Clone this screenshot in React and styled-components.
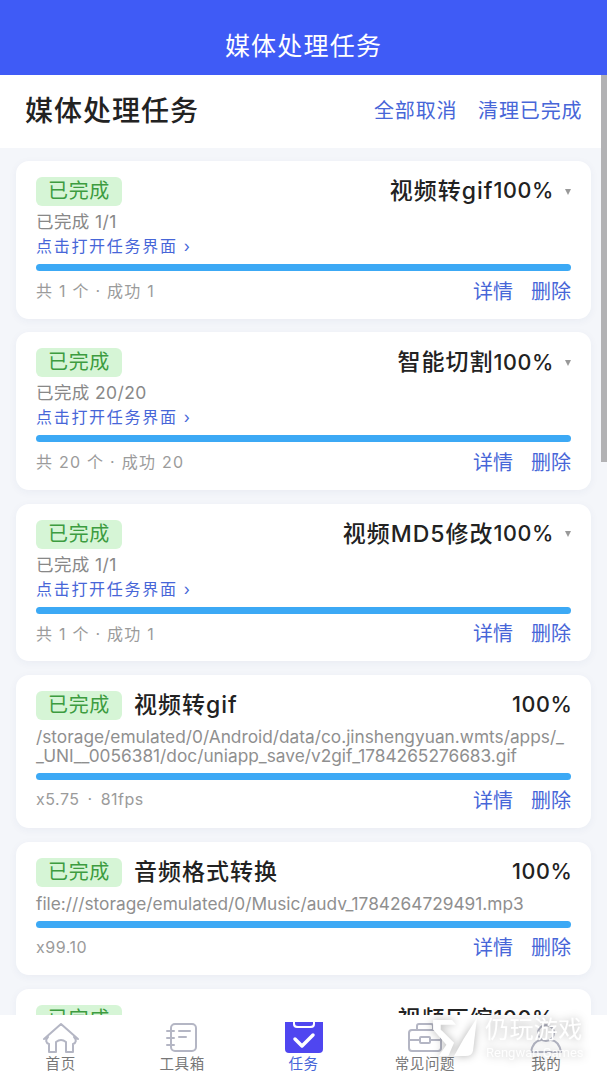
import React from 'react';
import styled, { createGlobalStyle } from 'styled-components';

const Global = createGlobalStyle`
  html, body { margin: 0; padding: 0; height: 1080px; overflow: hidden; background: #f4f6fa; }
  body { font-family: Inter, "Noto Sans CJK SC", sans-serif; }
  #root { height: 1080px; }
`;
const Page = styled.div`
  position: relative; width: 607px; height: 1080px; overflow: hidden;
  display: flex; flex-direction: column; background: #f4f6fa;
`;
const Header = styled.header`
  height: 75px; flex: none; background: #3f5bf6; color: #fff; box-sizing: border-box;
  padding-top: 30px; text-align: center; font-size: 25px; line-height: 33px; letter-spacing: 1.2px;
`;
const SubBar = styled.div`
  height: 73px; flex: none; box-sizing: border-box; background: #fff; display: flex; align-items: center;
  justify-content: space-between; padding: 0 24.5px 5px 25px;
`;
const SubTitle = styled.h1`
  margin: 0; font-size: 28px; font-weight: 500; color: #222; letter-spacing: 1px;
`;
const SubActions = styled.div`
  display: flex; gap: 20.5px; font-size: 20px; color: #4766d8; letter-spacing: 0.9px;
`;
const List = styled.main`
  flex: 1; min-height: 0; padding: 13px 16px 0; display: flex; flex-direction: column; gap: 13.7px; overflow: hidden;
`;
const Card = styled.section`
  flex: none; box-sizing: border-box; background: #fff; border-radius: 13px; padding: 16px 20px 0;
  height: ${p => p.$h}px; box-shadow: 0 2px 8px rgba(40, 60, 110, 0.05);
`;
const Top = styled.div`
  display: flex; align-items: center; height: 29px;
`;
const Badge = styled.span`
  flex: none; width: 86px; height: 29px; border-radius: 6px; background: #d6f5d6; color: #3d9c40;
  font-size: 20px; line-height: 28px; text-align: center; letter-spacing: 0.6px;
`;
const Title = styled.span`
  margin-left: ${p => (p.$right ? 'auto' : '12px')}; font-size: 23px; font-weight: 500; color: #222;
  line-height: 29px; letter-spacing: 1px;
`;
const Pct = styled.span`
  margin-left: ${p => (p.$auto ? 'auto' : '0')}; font-size: 21.5px; font-weight: 500; color: #222; line-height: 29px;
  letter-spacing: 0.6px; margin-top: -1.5px; margin-right: ${p => (p.$auto ? '-1.5px' : '0')};
`;
const Caret = styled.span`
  width: 0; height: 0; margin: 0 0 0 11px; border-left: 3.5px solid transparent; border-right: 3.5px solid transparent;
  border-top: 6px solid #999;
`;
const Status = styled.div`
  margin: 4px 0 0 0; font-size: 17.5px; line-height: 24px; color: #888; letter-spacing: 0.4px;
`;
const OpenLink = styled.div`
  font-size: 16px; line-height: 24px; color: #4766d8; height: 22px; letter-spacing: 1.7px;
`;
const Path = styled.div`
  margin-top: 7px; font-size: 17.3px; line-height: 19.5px; color: #8f8f8f; word-break: break-all;
`;
const Track = styled.div`
  margin-top: ${p => p.$mt}px; height: 7px; border-radius: 4px; background: #3ca9f5;
`;
const Foot = styled.div`
  display: flex; justify-content: space-between; align-items: center; margin-top: 7px; height: 24px;
`;
const Meta = styled.span`
  font-size: 16px; color: #9b9b9b; letter-spacing: ${p => (p.$latin ? '0.5px' : '1.25px')};
  word-spacing: ${p => (p.$latin ? '3px' : '0')};
`;
const Actions = styled.div`
  display: flex; gap: 18px; font-size: 20px; color: #4766d8;
`;
const TabBar = styled.nav`
  flex: none; height: 65px; background: #fff; display: flex; position: relative;
`;
const Tab = styled.div`
  flex: 1; display: flex; flex-direction: column; align-items: center; color: ${p => (p.$on ? '#4766d8' : '#777')};
`;
const TabIcon = styled.svg`
  width: 40px; height: 32px; margin-top: 7px; display: block; flex: none;
`;
const TabLabel = styled.span`
  font-size: 14.5px; line-height: 18px; margin-top: 1px; letter-spacing: 0.6px;
`;
const Scrollbar = styled.div`
  position: absolute; right: 0; top: 75px; width: 6px; height: 387px; background: #b2b2b4;
`;
const Mark = styled.div`
  position: absolute; left: 433px; top: 1016px; width: 170px; height: 48px; color: #fff; pointer-events: none;
  filter: drop-shadow(0 0 4px rgba(0, 0, 0, 0.3));
`;
const MarkName = styled.div`
  position: absolute; left: 52px; top: -1px; font-size: 24px; line-height: 30px; letter-spacing: 0.4px; white-space: nowrap;
`;
const MarkSub = styled.div`
  position: absolute; left: 53px; top: 30px; font-size: 13px; line-height: 14px; white-space: nowrap;
  font-family: Roboto, sans-serif; color: rgba(255,255,255,0.9);
`;
const MarkLogo = styled.svg`
  position: absolute; left: 0; top: 2px; width: 44px; height: 40px;
`;

const Group = ({ title, status, meta }) => (
  <Card $h={157.6}>
    <Top>
      <Badge>已完成</Badge>
      <Title $right>{title}</Title>
      <Pct>100%</Pct>
      <Caret />
    </Top>
    <Status>{status}</Status>
    <OpenLink>点击打开任务界面 ›</OpenLink>
    <Track $mt={8} />
    <Foot>
      <Meta>{meta}</Meta>
      <Actions><span>详情</span><span>删除</span></Actions>
    </Foot>
  </Card>
);
const Single = ({ h, title, path, meta }) => (
  <Card $h={h}>
    <Top>
      <Badge>已完成</Badge>
      <Title>{title}</Title>
      <Pct $auto>100%</Pct>
    </Top>
    <Path>{path}</Path>
    <Track $mt={7.5} />
    <Foot><Meta $latin>{meta}</Meta><Actions><span>详情</span><span>删除</span></Actions></Foot>
  </Card>
);

const stroke = { fill: 'none', stroke: '#b4b6c4', strokeWidth: 2, strokeLinecap: 'round', strokeLinejoin: 'round' };

export default function App() {
  return (
    <Page>
      <Global />
      <Header>媒体处理任务</Header>
      <SubBar>
        <SubTitle>媒体处理任务</SubTitle>
        <SubActions><span>全部取消</span><span>清理已完成</span></SubActions>
      </SubBar>
      <List>
        <Group title="视频转gif" status="已完成 1/1" meta="共 1 个 · 成功 1" />
        <Group title="智能切割" status="已完成 20/20" meta="共 20 个 · 成功 20" />
        <Group title="视频MD5修改" status="已完成 1/1" meta="共 1 个 · 成功 1" />
        <Single h={153.3} title="视频转gif" path="/storage/emulated/0/Android/data/co.jinshengyuan.wmts/apps/__UNI__0056381/doc/uniapp_save/v2gif_1784265276683.gif" meta="x5.75 · 81fps" />
        <Single h={133.3} title="音频格式转换" path="file:///storage/emulated/0/Music/audv_1784264729491.mp3" meta="x99.10" />
        <Group title="视频压缩" status="已完成 1/1" meta="共 1 个 · 成功 1" />
      </List>
      <Scrollbar />
      <TabBar>
        <Tab>
          <TabIcon viewBox="0 0 40 32" {...stroke}>
            <path d="M3 17 L20 2 L37 17 M7 15 C4 18 5 21 8 22 L8 30 L15 30 L15 20 Q20 16 25 20 L25 30 L32 30 L32 22 C35 21 36 18 33 15" />
          </TabIcon>
          <TabLabel>首页</TabLabel>
        </Tab>
        <Tab>
          <TabIcon viewBox="0 0 40 32" {...stroke}>
            <rect x="9" y="2" width="25" height="27" rx="4" />
            <path d="M5 9h7M5 16h7M5 23h7M17 9h11M17 15h7" />
          </TabIcon>
          <TabLabel>工具箱</TabLabel>
        </Tab>
        <Tab $on>
          <TabIcon viewBox="0 0 40 32">
            <path d="M1 0 H39 V27 Q39 31 35 31 H5 Q1 31 1 27 Z" fill="#4f46f0" />
            <path d="M9 -1 V2 Q9 6 13 6 H27 Q31 6 31 2 V-1" fill="#fff" stroke="#fff" strokeWidth="0" />
            <path d="M11 0 V1.5 Q11 4 14 4 H26 Q29 4 29 1.5 V0 Z" fill="#4f46f0" />
            <path d="M11 17 L18 24 L29 13" fill="none" stroke="#fff" strokeWidth="3.5" strokeLinecap="round" strokeLinejoin="round" />
          </TabIcon>
          <TabLabel>任务</TabLabel>
        </Tab>
        <Tab>
          <TabIcon viewBox="0 0 40 32" {...stroke}>
            <rect x="4" y="8" width="32" height="21" rx="3" />
            <path d="M12 8 V4 Q12 2 14 2 H26 Q28 2 28 4 V8 M4 18 H15 M25 18 H36" />
            <rect x="15" y="15" width="10" height="6" rx="1" />
          </TabIcon>
          <TabLabel>常见问题</TabLabel>
        </Tab>
        <Tab>
          <TabIcon viewBox="0 0 40 32" {...stroke}>
            <circle cx="20" cy="11" r="8" />
            <path d="M5 30 Q7 19 15 18 M35 30 Q33 19 25 18 M5 30 H35" />
          </TabIcon>
          <TabLabel>我的</TabLabel>
        </Tab>
      </TabBar>
      <Mark>
        <MarkLogo viewBox="0 0 46 42">
          <path d="M0 2 H20 L24 7 L8 7 L8 12 L22 26 L16 40 L6 40 L14 28 L0 12 Z" fill="#fff" />
          <path d="M46 0 L42 34 Q41 40 34 40 L22 40 L32 22 Z" fill="#fff" />
        </MarkLogo>
        <MarkName>仍玩游戏</MarkName>
        <MarkSub>Rengwan Games</MarkSub>
      </Mark>
    </Page>
  );
}
